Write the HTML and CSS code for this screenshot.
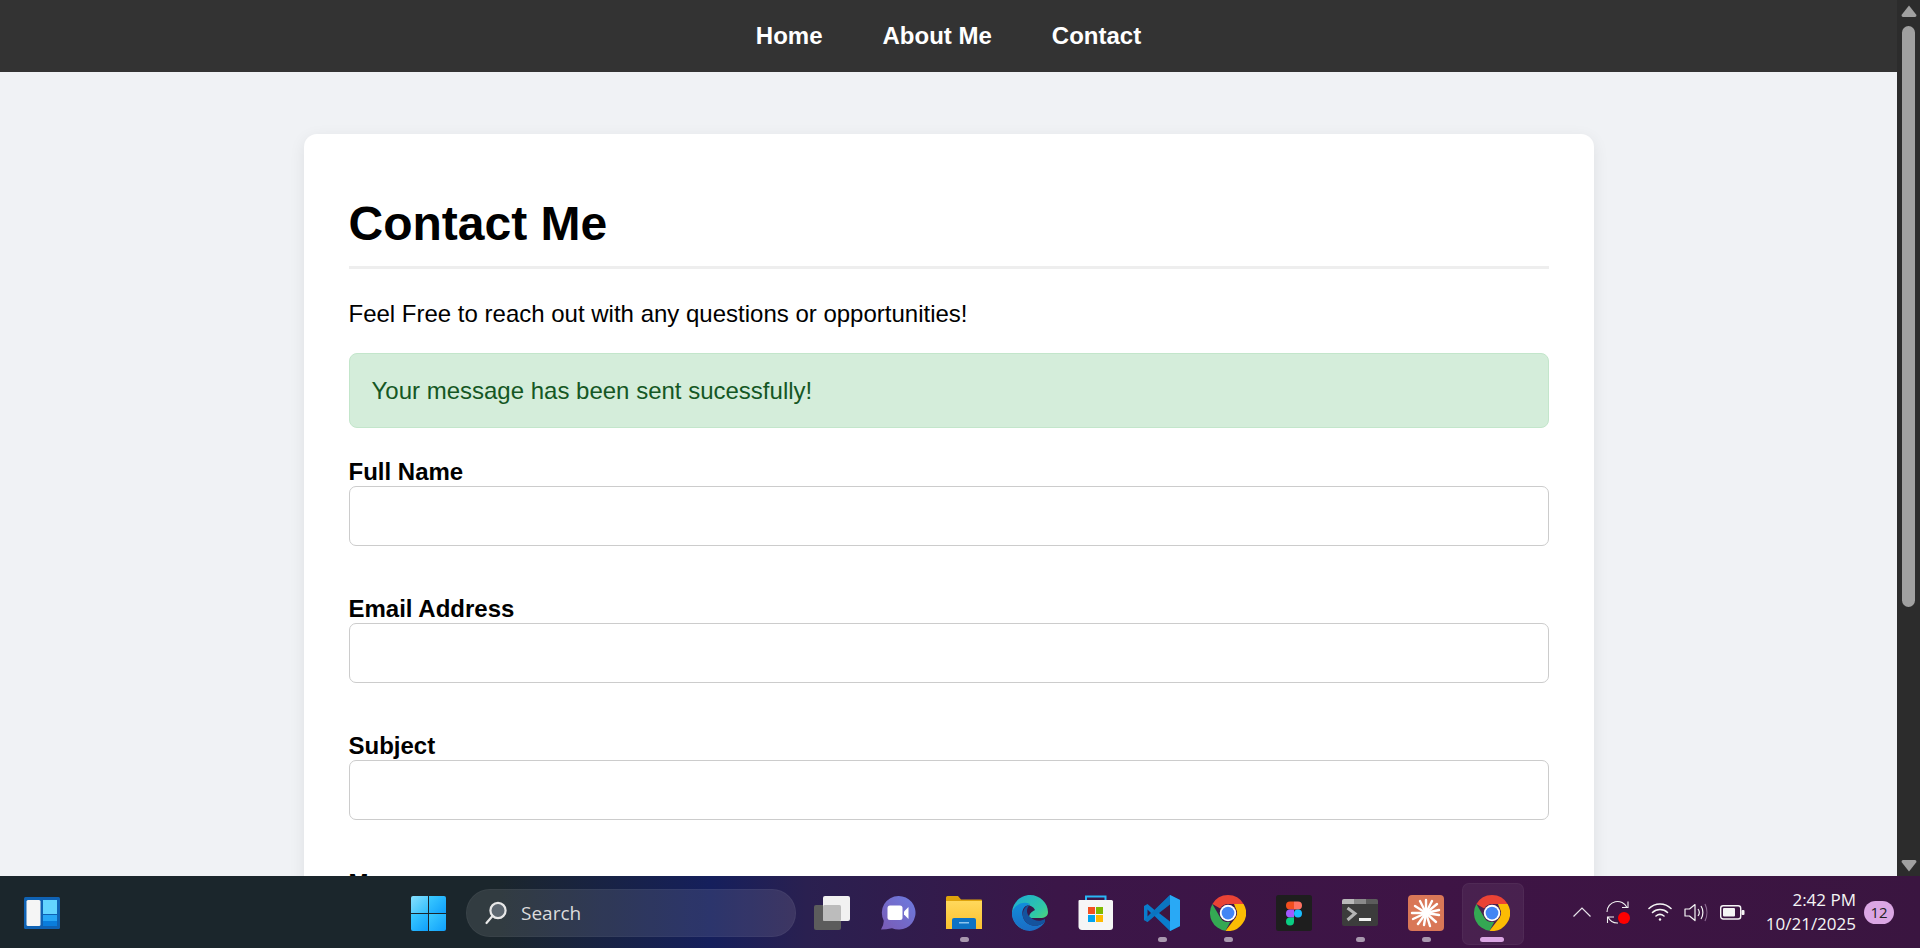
FILE: index.html
```html
<!DOCTYPE html>
<html lang="en">
<head>
<meta charset="utf-8">
<title>Contact Me</title>
<link rel="stylesheet" href="styles.css">
</head>
<body>
<div class="window">
  <div class="page">
    <nav class="nav">
      <a href="#">Home</a>
      <a href="#">About Me</a>
      <a href="#">Contact</a>
    </nav>
    <main class="card">
      <h1>Contact Me</h1>
      <p class="intro">Feel Free to reach out with any questions or opportunities!</p>
      <div class="alert">Your message has been sent sucessfully!</div>
      <form class="form">
        <div class="field"><label for="n">Full Name</label><input id="n" type="text"></div>
        <div class="field"><label for="e">Email Address</label><input id="e" type="email"></div>
        <div class="field"><label for="s">Subject</label><input id="s" type="text"></div>
        <div class="field"><label for="m">Message</label><textarea id="m"></textarea></div>
      </form>
    </main>
  </div>
  <div class="scrollbar">
    <svg class="arrow" width="16" height="12" viewBox="0 0 16 12"><path d="M8 .5 15.500 10Q15.500 12 14 12H2Q.5 12 .5 10Z"/></svg>
    <div class="thumb"></div>
    <svg class="arrow" width="16" height="12" viewBox="0 0 16 12"><path d="M8 11.500 15.500 2Q15.500 0 14 0H2Q.5 0 .5 2Z"/></svg>
  </div>
</div>
<footer class="taskbar">
  <svg class="widgets" width="36" height="32" viewBox="0 0 36 32">
    <rect width="36" height="32" rx="1.500" fill="#0f62b4"/>
    <rect x="2.500" y="3" width="14" height="26" rx="1.500" fill="#f5f5f5"/>
    <rect x="19" y="3" width="14" height="14" fill="#63d4ff"/>
    <rect x="19" y="18" width="14" height="6" fill="#27a6f5"/>
    <rect x="19" y="24" width="14" height="5" fill="#0a7ddc"/>
  </svg>
  <svg class="start" width="35" height="35" viewBox="0 0 35 35">
    <defs>
      <linearGradient id="w1" x1="0" y1="0" x2="1" y2="1"><stop offset="0" stop-color="#86e0ff"/><stop offset="1" stop-color="#30bdfb"/></linearGradient>
      <linearGradient id="w2" x1="0" y1="0" x2="1" y2="1"><stop offset="0" stop-color="#3ccbff"/><stop offset="1" stop-color="#0f9ffb"/></linearGradient>
    </defs>
    <path d="M2 0H17V17H0V2Q0 0 2 0Z" fill="url(#w1)"/>
    <path d="M18 0H33Q35 0 35 2V17H18Z" fill="url(#w2)"/>
    <path d="M0 18H17V35H2Q0 35 0 33Z" fill="url(#w2)"/>
    <path d="M18 18H35V33Q35 35 33 35H18Z" fill="url(#w2)"/>
  </svg>
  <div class="search">
    <svg width="24" height="24" viewBox="0 0 24 24" fill="none" stroke="#e8e8e8" stroke-width="2.200"><circle cx="14" cy="9.500" r="7.600" fill="#5d6770"/><path d="M8.500 15 2.500 22" stroke-linecap="round"/></svg>
    <span>Search</span>
  </div>
  <div class="apps">
    <div class="app">
      <svg width="36" height="36" viewBox="0 0 36 36">
        <rect x="0" y="10" width="27" height="25" rx="2" fill="#5c5c5c"/>
        <rect x="9" y="1" width="27" height="25" rx="2" fill="#f1f1f1"/>
        <rect x="9" y="10" width="18" height="16" rx="1.500" fill="#bcbcbc"/>
      </svg>
    </div>
    <div class="app">
      <svg width="36" height="36" viewBox="0 0 36 36">
        <defs><linearGradient id="mt" x1="0" y1="1" x2="1" y2="0"><stop offset="0" stop-color="#7a5bb5"/><stop offset="1" stop-color="#6c7be0"/></linearGradient></defs>
        <path d="M18.500 1A16.800 16.800 0 1 1 12 33.200Q6 34.500 1 34.500 4 30 3.700 25.500A16.800 16.800 0 0 1 18.500 1Z" fill="url(#mt)"/>
        <rect x="7.500" y="10.500" width="15" height="14.500" rx="2.500" fill="#fff"/>
        <path d="M24 16.500 28.500 12V24L24 19.500Z" fill="#fff"/>
      </svg>
    </div>
    <div class="app running">
      <svg width="36" height="36" viewBox="0 0 36 36">
        <path d="M0 2.500Q0 1 1.500 1H12L15 4.500H35Q36 4.500 36 5.500V12H0Z" fill="#dfa30c"/>
        <defs><linearGradient id="fo" x1="0" y1="0" x2="0" y2="1"><stop offset="0" stop-color="#ffd85c"/><stop offset="1" stop-color="#fcc12f"/></linearGradient></defs>
        <rect x="0" y="6" width="36" height="28" fill="url(#fo)"/>
        <path d="M6 34V25Q6 23 8 23H28Q30 23 30 25V34Z" fill="#0d72c4"/>
        <rect x="13" y="27" width="10" height="1.500" fill="#8cc4ee"/>
      </svg>
    </div>
    <div class="app">
      <svg width="36" height="36" viewBox="0 0 36 36">
        <defs>
          <linearGradient id="e1" x1="0" y1="0" x2="1" y2="1"><stop offset="0" stop-color="#1ba9d6"/><stop offset="0.600" stop-color="#30c8a6"/><stop offset="1" stop-color="#6ade54"/></linearGradient>
          <linearGradient id="e2" x1="0" y1="0" x2="0" y2="1"><stop offset="0" stop-color="#118edb"/><stop offset="1" stop-color="#1b6cc4"/></linearGradient>
        </defs>
        <path d="M0 17C1 6 10 0 18 0 28 0 36 8 36 17 36 21 33 23 28 23H17C17 18 21 16 23 15 20 9 12 9 8 14 3 20 5 30 14 35 6 34 0 26 0 17Z" fill="url(#e1)"/>
        <path d="M0 17C3 9 12 6 18 9 12 11 9 15 11 22 13 30 24 34 33 27 28 34 21 37 14 35.500 5 33 -1 25 0 17Z" fill="url(#e2)"/>
        <path d="M11 22C10 16 13 11 18 9.500 14 13 14 19 18 22 22 26 28 27 33 24L33 27C26 33 14 32 11 22Z" fill="#14539e"/>
      </svg>
    </div>
    <div class="app">
      <svg width="36" height="36" viewBox="0 0 36 36">
        <path d="M8 6V1.500H27.500V6" fill="none" stroke="#29b6f6" stroke-width="2"/>
        <path d="M1.500 5H33.500Q35 5 35 6.500V32Q35 35 32 35H4Q1 35 .5 32V6Q.5 5 1.500 5Z" fill="#f6f6f6"/>
        <rect x="10" y="12" width="7" height="7" fill="#f25022"/>
        <rect x="18" y="12" width="7" height="7" fill="#7fba00"/>
        <rect x="10" y="20" width="7" height="7" fill="#00a4ef"/>
        <rect x="18" y="20" width="7" height="7" fill="#ffb900"/>
      </svg>
    </div>
    <div class="app running">
      <svg width="36" height="36" viewBox="0 0 36 36">
        <path d="M26 0 36 5V31L26 36 10.500 21 3.500 27 0 25V11L3.500 9 10.500 15Z" fill="#0a7ccc"/>
        <path d="M26 0 36 5V31L26 36 26 9.500 10.500 21 3.500 27 0 25Z" fill="#0b6fb8" opacity=".6"/>
        <path d="M26 0 36 5V31L26 36Z" fill="#29a9f5"/>
        <path d="M26 9.500 15 18 26 26.500Z" fill="#3d1540"/>
        <path d="M3.500 14.500 7 18 3.500 21.500Z" fill="#3d1540"/>
      </svg>
    </div>
    <div class="app running">
      <svg width="36" height="36" viewBox="0 0 48 48"><use href="#chrome"/></svg>
    </div>
    <div class="app">
      <svg width="36" height="36" viewBox="0 0 36 36">
        <rect width="36" height="36" rx="2.500" fill="#1e1e1e"/>
        <path d="M14 6.500H18V14.500H14A4 4 0 0 1 14 6.500Z" fill="#f24e1e"/>
        <path d="M18 6.500H22A4 4 0 0 1 22 14.500H18Z" fill="#ff7262"/>
        <path d="M18 14.500V22.500H14A4 4 0 0 1 14 14.500Z" fill="#a259ff"/>
        <circle cx="22" cy="18.500" r="4" fill="#1abcfe"/>
        <path d="M14 22.500H18V26.500A4 4 0 1 1 14 22.500Z" fill="#0acf83"/>
      </svg>
    </div>
    <div class="app running">
      <svg width="36" height="36" viewBox="0 0 36 36">
        <rect x="0" y="4" width="36" height="27" rx="2" fill="#3c3c3c"/>
        <path d="M2 4H12V9H0V6Q0 4 2 4Z" fill="#b9b9b9"/>
        <rect x="12" y="4" width="12" height="5" fill="#8a8a8a"/>
        <path d="M24 4H34Q36 4 36 6V9H24Z" fill="#5c5c5c"/>
        <path d="M5.500 13 13 18.500 5.500 25" fill="none" stroke="#b5b5b5" stroke-width="3"/>
        <rect x="17" y="23" width="12" height="3" fill="#f1f1f1"/>
      </svg>
    </div>
    <div class="app running">
      <svg width="36" height="36" viewBox="0 0 36 36">
        <rect width="36" height="36" rx="4" fill="#d97757"/>
        <g stroke="#fff" stroke-width="2.400" stroke-linecap="round">
          <path d="M18 18 18 5"/><path d="M18 18 24 6"/><path d="M18 18 29 9"/><path d="M18 18 31 15"/><path d="M18 18 31 20"/><path d="M18 18 28 27"/><path d="M18 18 22 31"/><path d="M18 18 16 30"/><path d="M18 18 10 29"/><path d="M18 18 5 24"/><path d="M18 18 4 18"/><path d="M18 18 7 11"/><path d="M18 18 12 6"/>
        </g>
      </svg>
    </div>
    <div class="app active">
      <svg width="36" height="36" viewBox="0 0 48 48">
        <defs>
          <g id="chrome">
            <path d="M24 0A24 24 0 0 1 44.800 12L24 12A12 12 0 0 0 13.600 18L3.200 12A24 24 0 0 1 24 0Z" fill="#ea4335"/>
            <path d="M3.200 12 13.600 30A12 12 0 0 0 27.100 35.600L20.700 47.800A24 24 0 0 1 3.200 12Z" fill="#34a853"/>
            <path d="M44.800 12A24 24 0 0 1 20.700 47.800L34.400 30A12 12 0 0 0 34.400 18L32 12Z" fill="#fbbc04"/>
            <circle cx="24" cy="24" r="11" fill="#fff"/>
            <circle cx="24" cy="24" r="8.500" fill="#4285f4"/>
          </g>
        </defs>
        <use href="#chrome"/>
      </svg>
    </div>
  </div>
  <div class="tray">
    <svg class="tray-chevron" width="18" height="10" viewBox="0 0 18 10" fill="none" stroke="#e8e4ea" stroke-width="1.200"><path d="M.5 9.500 9 1l8.500 8.500"/></svg>
    <svg class="tray-sync" width="24" height="24" viewBox="0 0 24 24" fill="none" stroke="#f2f2f2" stroke-width="1.100">
      <path d="M1 12A10.500 10.500 0 0 1 21 7.500"/><path d="M22 1.500V7.500H16"/><path d="M12 23A10.500 10.500 0 0 1 2 17"/><path d="M1.500 23V17H8"/>
      <circle cx="18" cy="18" r="6" fill="#ff0000" stroke="none"/>
    </svg>
    <svg class="tray-wifi" width="24" height="24" viewBox="0 0 24 24" fill="none" stroke="#f5f5f5" stroke-width="1.600" stroke-linecap="round">
      <path d="M1 8.500C7 2.500 17 2.500 23 8.500"/><path d="M4.500 12.500C8.500 8.500 15.500 8.500 19.500 12.500"/><path d="M8 16C10.500 14 13.500 14 16 16"/><circle cx="12" cy="19.500" r="1.200" fill="#f5f5f5" stroke="none"/>
    </svg>
    <svg class="tray-sound" width="24" height="24" viewBox="0 0 24 24" fill="none" stroke="#f5f5f5" stroke-width="1.200">
      <path d="M1 9V16H5.500L11 20.500V4.500L5.500 9Z" stroke-linejoin="round"/><path d="M14 9C15.500 11 15.500 14 14 16"/><path d="M17 6C19.500 9.500 19.500 15.500 17 19"/><path d="M21 4C23.500 9 23.500 16 21 21" stroke="#8d6a92"/>
    </svg>
    <svg class="tray-battery" width="25" height="24" viewBox="0 0 25 24" fill="none">
      <rect x=".7" y="5.700" width="20" height="13.300" rx="2.500" stroke="#f5f5f5" stroke-width="1.400"/>
      <rect x="3" y="8" width="12" height="8.600" rx="1" fill="#f5f5f5"/>
      <rect x="21.500" y="10" width="3" height="5" rx="1" fill="#f5f5f5"/>
    </svg>
    <div class="clock"><span>2:42 PM</span><span>10/21/2025</span></div>
    <div class="badge">12</div>
  </div>
</footer>
</body>
</html>
```

FILE: styles.css
```css
* { box-sizing: border-box; }
html, body { margin: 0; height: 948px; overflow: hidden; }
body { display: flex; flex-direction: column; font-family: "Liberation Sans", Arial, sans-serif; background: #f0f2f5; color: #000; }

.window { display: flex; height: 876px; flex: none; overflow: hidden; }
.page { flex: 1; min-width: 0; height: 876px; overflow: hidden; background: #f0f2f5; }

.nav { height: 72px; background: #333; display: flex; justify-content: center; align-items: center; gap: 60px; }
.nav a { color: #fff; font-size: 24px; font-weight: 700; text-decoration: none; }

.card { width: 1290px; margin: 62px auto 0; padding: 45px; background: #fff; border-radius: 13px; box-shadow: 0 4px 16px rgba(0,0,0,.08); }
h1 { margin: 0; padding: 17px 0 15px; font-size: 48px; line-height: 55px; font-weight: 700; border-bottom: 3px solid #eee; }
.intro { margin: 31px 0 25px; font-size: 24px; line-height: 28px; }
.alert { padding: 22px; height: 75px; font-size: 24px; line-height: 29px; color: #155724; background: #d4edda; border: 1px solid #c3e6cb; border-radius: 8px; }
.form { margin-top: 30px; display: flex; flex-direction: column; gap: 49px; }
.field { display: flex; flex-direction: column; }
label { font-size: 24px; font-weight: 700; line-height: 28px; }
input, textarea { display: block; width: 100%; height: 60px; border: 1.500px solid #ccc; border-radius: 7px; background: #fff; padding: 0 14px; font: inherit; }
textarea { height: 180px; }

.scrollbar { width: 23px; height: 876px; flex: none; background: #2c2c2c; display: flex; flex-direction: column; align-items: center; padding: 5px 0 4px; }
.arrow { flex: none; fill: #a0a0a0; }
.scrollbar .thumb { width: 13px; height: 581px; margin-top: 9px; background: #a0a0a0; border-radius: 7px; }
.scrollbar .arrow:last-child { margin-top: auto; }

.taskbar { position: relative; height: 72px; flex: none; display: flex; align-items: center; padding-top: 2px; background: linear-gradient(90deg, #1b262c 0, #1b262c 26%, #151f5c 37%, #2a2050 42%, #3b1648 55%, #3e1445 75%, #3a1540 100%); color: #f5f5f5; font-family: "Open Sans", "Noto Sans", sans-serif; }
.widgets { margin-left: 24px; flex: none; }
.start { margin-left: 351px; flex: none; }
.search { margin-left: 20px; width: 330px; height: 48px; border-radius: 24px; display: flex; align-items: center; gap: 13px; padding-left: 17px; background: rgba(255,255,255,.1); border: 1px solid rgba(255,255,255,.04); font-size: 19px; color: #dcdcdc; }
.apps { margin-left: 18px; display: flex; gap: 30px; align-items: center; }
.app { position: relative; width: 36px; height: 36px; display: flex; }
.running::after { content: ""; position: absolute; left: 14px; bottom: -11px; width: 9px; height: 5px; border-radius: 3px; background: #a898ae; }
.active::before { content: ""; position: absolute; left: -12px; top: -12px; width: 60px; height: 60px; border-radius: 7px; background: rgba(255,255,255,.06); border: 1px solid rgba(255,255,255,.04); }
.active::after { content: ""; position: absolute; left: 6px; bottom: -11px; width: 24px; height: 5px; border-radius: 3px; background: #dba6e4; }
.app svg { position: relative; }
.tray { position: absolute; right: 26px; top: 0; height: 72px; display: flex; align-items: center; }
.tray-chevron { margin-right: 15px; }
.tray-sync { margin-right: 18px; }
.tray-wifi, .tray-sound { margin-right: 12px; }
.tray-battery { margin-right: 21px; }
.clock { display: flex; flex-direction: column; align-items: flex-end; font-size: 17px; line-height: 24px; margin-right: 8px; }
.badge { width: 30px; height: 23px; border-radius: 12px; background: #dba6e4; color: #222; font-size: 15px; display: flex; align-items: center; justify-content: center; }
```
